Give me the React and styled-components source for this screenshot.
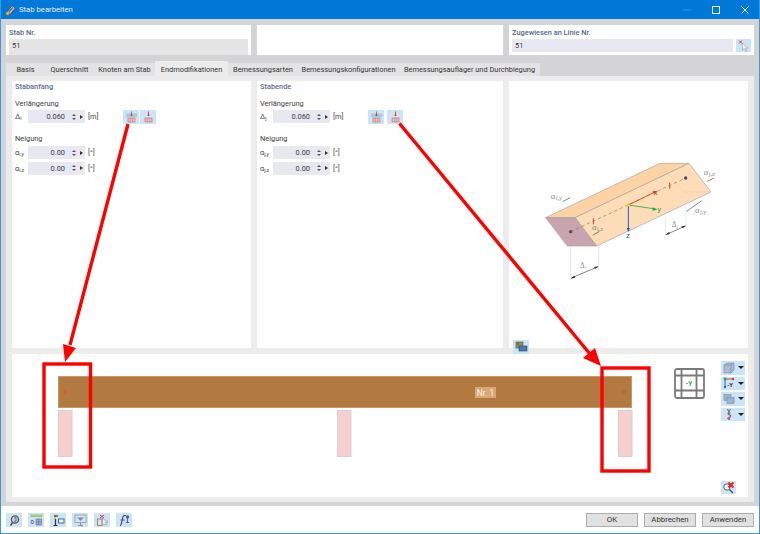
import React from "react";
import styled, { createGlobalStyle } from "styled-components";

const GlobalStyle = createGlobalStyle`
  html, body {
    margin: 0;
    padding: 0;
    background: #ffffff;
  }
  body {
    font-family: Roboto, "Noto Sans", sans-serif;
    font-size: 7.4px;
    color: #3c3c3c;
  }
`;

const Window = styled.div`
  position: relative;
  display: flex;
  flex-direction: column;
  box-sizing: border-box;
  width: 760px;
  height: 534px;
  overflow: hidden;
  border: 1px solid #3f98dc;
  border-top: 0;
  background: #ffffff;
`;

const TitleBar = styled.div`
  display: flex;
  align-items: center;
  flex: 0 0 19px;
  margin: 0 -1px;
  padding-left: 5px;
  background: #0078d7;
  color: #e6f2fb;
  font-size: 7.7px;
`;

const TitleText = styled.span`
  margin-left: 3px;
`;

const WindowControls = styled.div`
  display: flex;
  align-items: center;
  margin-left: auto;
  padding-right: 1px;
`;

const ControlButton = styled.div`
  display: flex;
  align-items: center;
  justify-content: center;
  width: 29px;
  height: 19px;
`;

const Body = styled.div`
  display: flex;
  flex-direction: column;
  flex: 1;
  padding: 6px 5px 4px;
  background: #d4d4d7;
`;

const HeaderRow = styled.div`
  display: grid;
  grid-template-columns: 245px 246px 245px;
  gap: 6px;
  height: 30px;
`;

const HeaderCard = styled.div`
  display: flex;
  flex-direction: column;
  padding: 2px 3px 0;
  background: #ffffff;
`;

const FieldTitle = styled.div`
  height: 12px;
  line-height: 12px;
  color: #56658a;
  font-weight: 500;
`;

const HeaderFieldRow = styled.div`
  display: flex;
  gap: 3px;
`;

const TextField = styled.div`
  flex: 1;
  height: 13px;
  padding-left: 3px;
  line-height: 14px;
  background: ${props => (props.$readOnly ? "#e5e5e5" : "#e8e8f2")};
`;

const Tabs = styled.div`
  display: flex;
  align-items: flex-end;
  height: 15px;
  margin-top: 6px;
`;

const Tab = styled.div`
  display: flex;
  align-items: center;
  justify-content: center;
  box-sizing: border-box;
  width: ${props => props.$width}px;
  height: ${props => (props.$active ? 15 : 13)}px;
  padding-top: ${props => (props.$active ? 2 : 0)}px;
  background: ${props => (props.$active ? "#ececec" : "#e3e3e5")};
  color: #333333;
  white-space: nowrap;
`;

const TabPanel = styled.div`
  display: grid;
  grid-template-columns: 239px 246px 239px;
  grid-template-rows: 267px 143px;
  gap: 6px;
  padding: 5px 6px;
  background: #ececec;
`;

const Card = styled.div`
  display: flex;
  flex-direction: column;
  padding: 0 3px;
  background: #ffffff;
`;

const CardTitle = styled.div`
  height: 11px;
  line-height: 11px;
  color: #5a6a92;
  font-weight: 500;
`;

const GroupTitle = styled.div`
  height: 11px;
  margin-top: ${props => props.$top}px;
  line-height: 11px;
`;

const ParamRow = styled.div`
  display: flex;
  align-items: center;
  height: 13px;
  margin-top: ${props => props.$top}px;
`;

const Symbol = styled.span`
  width: 13px;
  color: #4a4a55;
`;

const Sub = styled.span`
  font-size: 5.4px;
  vertical-align: -1px;
`;

const NumberField = styled.div`
  display: flex;
  align-items: center;
  width: 57px;
  height: 13px;
  background: #e8e8f2;
`;

const FieldValue = styled.span`
  width: 37px;
  text-align: right;
`;

const Spinner = styled.span`
  display: flex;
  flex-direction: column;
  gap: 2px;
  margin-left: 6.5px;
`;

const SpinArrow = styled.span`
  width: 0;
  height: 0;
  border-left: 2px solid transparent;
  border-right: 2px solid transparent;
  ${props => (props.$up ? "border-bottom" : "border-top")}: 2px solid #555555;
`;

const PlayArrow = styled.span`
  width: 0;
  height: 0;
  margin-left: 4.5px;
  border-top: 2px solid transparent;
  border-bottom: 2px solid transparent;
  border-left: 3px solid #333333;
`;

const Unit = styled.span`
  width: 17px;
  margin-left: 3px;
  color: #444444;
`;

const EndButtons = styled.div`
  display: flex;
  gap: ${props => props.$gap}px;
  margin-left: 18px;
`;

const ToolButton = styled.div`
  display: flex;
  align-items: center;
  justify-content: center;
  flex: none;
  width: ${props => props.$width || 16}px;
  height: ${props => props.$height || 14}px;
  background: ${props => props.$bg || "#cce4f7"};
`;

const DiagramCard = styled(Card)`
  padding: 0;
`;

const Isometric = styled.svg`
  flex: none;
  margin: 69px 0 0 1px;
`;

const PictureButton = styled(ToolButton)`
  margin: auto 0 3px 4px;
`;

const ModelCard = styled.div`
  grid-column: 1 / -1;
  display: flex;
  background: #ffffff;
`;

const ModelView = styled.svg`
  flex: none;
`;

const ViewCube = styled.svg`
  flex: none;
  margin: 14px 0 0 14px;
`;

const ToolRail = styled.div`
  display: flex;
  flex-direction: column;
  gap: 2px;
  margin: 7px 0 0 16px;
  width: 24px;
  height: 133px;
`;

const RailButton = styled(ToolButton)`
  width: 24px;
  height: 13.5px;
  justify-content: flex-start;
  padding-left: 2px;
  box-sizing: border-box;
`;

const RailCaret = styled.span`
  width: 0;
  height: 0;
  margin-left: 2.5px;
  border-left: 3px solid transparent;
  border-right: 3px solid transparent;
  border-top: 3px solid #222222;
`;

const ClearButton = styled(ToolButton)`
  margin-top: auto;
`;

const Footer = styled.div`
  display: flex;
  align-items: center;
  flex: 0 0 27px;
  padding: 0 5px;
`;

const FooterIcons = styled.div`
  display: flex;
  gap: 6px;
`;

const FooterButtons = styled.div`
  display: flex;
  gap: 6px;
  margin-left: auto;
`;

const DialogButton = styled.div`
  box-sizing: border-box;
  width: 52px;
  height: 14px;
  border: 1px solid #adadad;
  background: #e1e1e1;
  color: #333333;
  font-size: 7.8px;
  line-height: 12px;
  text-align: center;
`;

const Annotations = styled.svg`
  position: absolute;
  top: 0;
  left: -1px;
  pointer-events: none;
`;

const tabs = [
  ["Basis", 39],
  ["Querschnitt", 49],
  ["Knoten am Stab", 61],
  ["Endmodifikationen", 73, true],
  ["Bemessungsarten", 70],
  ["Bemessungskonfigurationen", 101],
  ["Bemessungsauflager und Durchbiegung", 141]
];

const NumberInput = ({ value }) => (
  <NumberField>
    <FieldValue>{value}</FieldValue>
    <Spinner>
      <SpinArrow $up />
      <SpinArrow />
    </Spinner>
    <PlayArrow />
  </NumberField>
);

const EndIcon = ({ flip }) => (
  <svg width="13" height="12" viewBox="0 0 13 12">
    <rect x="1" y="2.5" width="11" height="3.5" fill={flip ? "#d4e4f2" : "#a9c6e2"} />
    <rect x="3" y="7" width="7" height="4" fill="#f3c4c4" stroke="#b86a6a" strokeWidth="0.6" />
    <path d="M5.3 7v4M7.7 7v4" stroke="#b86a6a" strokeWidth="0.5" />
    <path d="M6.5 0.5v4" stroke="#c9303a" strokeWidth="0.8" />
    <circle cx="6.5" cy="4.2" r="0.9" fill="#c9303a" />
  </svg>
);

const EndSection = ({ title, end, gap }) => (
  <Card>
    <CardTitle>{title}</CardTitle>
    <GroupTitle $top={6}>Verlängerung</GroupTitle>
    <ParamRow $top={1}>
      <Symbol>Δ<Sub>{end}</Sub></Symbol>
      <NumberInput value="0.060" />
      <Unit>[m]</Unit>
      <EndButtons $gap={gap}>
        <ToolButton><EndIcon /></ToolButton>
        <ToolButton><EndIcon flip /></ToolButton>
      </EndButtons>
    </ParamRow>
    <GroupTitle $top={9.5}>Neigung</GroupTitle>
    <ParamRow $top={2.5}>
      <Symbol>α<Sub>{end},y</Sub></Symbol>
      <NumberInput value="0.00" />
      <Unit>[°]</Unit>
    </ParamRow>
    <ParamRow $top={2.5}>
      <Symbol>α<Sub>{end},z</Sub></Symbol>
      <NumberInput value="0.00" />
      <Unit>[°]</Unit>
    </ParamRow>
  </Card>
);

const DimLabel = styled.text`
  font-family: "Liberation Serif", serif;
  font-size: ${props => props.$size || 26}px;
  fill: #8f8f8f;
`;

const AxisLabel = styled.text`
  font-family: Roboto, sans-serif;
  font-size: 24px;
  fill: ${props => props.$color};
`;

const IsometricBeam = () => (
  <Isometric width="240" height="190" viewBox="0 0 720 570">
    <path d="M107 203L450 40H537L195 203Z" fill="#fbd3a4" stroke="#a8a29a" strokeWidth="2" />
    <path d="M195 203L537 40L603 126L260 288Z" fill="#fddcb8" stroke="#a8a29a" strokeWidth="2" />
    <path d="M107 203H195L260 288H172Z" fill="#c9a3ad" stroke="#a8a29a" strokeWidth="2" />
    <path d="M450 40L520 126H603" fill="none" stroke="#edc69a" strokeWidth="1.5" />
    <path d="M182 245L527 84" stroke="#6b5a50" strokeWidth="1.5" strokeDasharray="10 8" />
    <circle cx="182" cy="245" r="5" fill="#4c4c5e" />
    <circle cx="527" cy="84" r="5" fill="#4c4c5e" />
    <path d="M250 205v18M479 98v18" stroke="#d6401c" strokeWidth="3" />
    <path d="M355 165L430 128" stroke="#c8401c" strokeWidth="2.5" />
    <path d="M442 122l-14 2 4 8Z" fill="#c8401c" />
    <path d="M355 165L430 176" stroke="#2aa84a" strokeWidth="2.5" />
    <path d="M442 178l-14-6v11Z" fill="#2aa84a" />
    <path d="M355 165V235" stroke="#2a55c8" strokeWidth="3" />
    <path d="M355 246l-5-12h10Z" fill="#2a55c8" />
    <rect x="350" y="160" width="9" height="9" fill="#f2d21a" />
    <AxisLabel x="431" y="134" $color="#c8401c">x</AxisLabel>
    <AxisLabel x="442" y="186" $color="#2aa84a">y</AxisLabel>
    <AxisLabel x="348" y="264" $color="#2a55c8">z</AxisLabel>
    <path d="M182 290V392M266 290V360M466 200V258M528 150V238" stroke="#d0d0d0" strokeWidth="1.5" />
    <path d="M184 384L264 350M468 254L526 228" stroke="#444" strokeWidth="2" />
    <path d="M182 386l14-3-3-6ZM266 349l-14 2 3 6ZM466 255l14-3-3-6ZM528 227l-14 2 3 6Z" fill="#333" />
    <path d="M158 155L180 143M248 256L268 244M530 184L575 152M592 94L612 84" stroke="#444" strokeWidth="2" />
    <DimLabel x="210" y="355" $size={22}>Δ</DimLabel>
    <DimLabel x="225" y="358" $size={13}>i</DimLabel>
    <DimLabel x="485" y="230" $size={22}>Δ</DimLabel>
    <DimLabel x="500" y="233" $size={13}>j</DimLabel>
    <DimLabel x="122" y="146">α</DimLabel>
    <DimLabel x="137" y="150" $size={19}>i,y</DimLabel>
    <DimLabel x="246" y="240">α</DimLabel>
    <DimLabel x="261" y="244" $size={19}>i,z</DimLabel>
    <DimLabel x="555" y="188">α</DimLabel>
    <DimLabel x="570" y="192" $size={19}>j,y</DimLabel>
    <DimLabel x="581" y="74">α</DimLabel>
    <DimLabel x="596" y="78" $size={19}>j,z</DimLabel>
  </Isometric>
);

const supports = [46, 325, 606];

const BeamModel = () => (
  <ModelView width="648" height="143" viewBox="0 0 648 143">
    <rect x="46.5" y="22.5" width="573" height="31" fill="#b27a40" stroke="#c89a68" />
    <circle cx="53" cy="38" r="1.8" fill="#c9603a" />
    <circle cx="612" cy="38" r="1.8" fill="#c9603a" />
    <rect x="463" y="33" width="21" height="11" fill="#d6a779" />
    <text x="473.5" y="41.5" textAnchor="middle" fontFamily="Roboto, sans-serif" fontSize="8.5" fill="#f8f0e4">Nr. 1</text>
    {supports.map(x => (
      <rect key={x} x={x + 0.5} y="56.5" width="13.5" height="46" fill="#f7cfcf" stroke="#d8d0d0" />
    ))}
  </ModelView>
);

const CubeView = () => (
  <ViewCube width="31" height="31" viewBox="0 0 31 31">
    <rect x="1" y="1" width="29" height="29" rx="2" fill="#ffffff" stroke="#7a7a7a" strokeWidth="1.8" />
    <path d="M7.5 1V30M22.5 1V30M1 7.5H30M1 22.5H30" stroke="#7a7a7a" strokeWidth="1.8" fill="none" />
    <text x="15" y="18" textAnchor="middle" fontFamily="Roboto, sans-serif" fontSize="6.5" fontWeight="700" fill="#3aa655">-Y</text>
  </ViewCube>
);

const RailIcon = ({ kind }) => (
  <svg width="12" height="12" viewBox="0 0 12 12">
    {kind === 0 && (
      <g fill="#a9bdd2" stroke="#7f93aa" strokeWidth="0.7">
        <path d="M1 3L4 1H11V8L8 11H1Z" />
        <path d="M1 3H8V11M8 3L11 1" fill="none" />
      </g>
    )}
    {kind === 1 && (
      <g strokeWidth="1">
        <path d="M2 2H10" stroke="#c43" />
        <path d="M2 2V10" stroke="#26b" />
        <circle cx="2" cy="2" r="1.4" fill="#2a4" />
        <circle cx="10" cy="2" r="1.2" fill="#c43" />
        <circle cx="2" cy="10" r="1.2" fill="#26b" />
        <text x="4" y="10" fontFamily="Roboto, sans-serif" fontSize="6" fontWeight="700" fill="#333">-Y</text>
      </g>
    )}
    {kind === 2 && (
      <g fill="#9fb3c9" stroke="#7f93aa" strokeWidth="0.7">
        <rect x="1" y="1.5" width="7" height="6" />
        <rect x="4" y="4.5" width="7" height="6" />
      </g>
    )}
    {kind === 3 && (
      <g fill="none" strokeWidth="1.2">
        <path d="M4 1.5C9 3 3 5 6 6.5S8 9 4 10.5" stroke="#d33" />
        <path d="M8 1.5C3 3 9 5 6 6.5" stroke="#3aa" />
        <circle cx="6" cy="11" r="0.9" fill="#26b" stroke="none" />
      </g>
    )}
  </svg>
);

const ClearIcon = () => (
  <svg width="13" height="13" viewBox="0 0 13 13">
    <circle cx="5" cy="6" r="3.2" fill="#eef4fa" stroke="#666" strokeWidth="1" />
    <path d="M7.5 8.5L11 12" stroke="#555" strokeWidth="1.4" />
    <path d="M6.5 1.5L11.5 6.5M11.5 1.5L6.5 6.5" stroke="#e0201c" strokeWidth="1.8" />
  </svg>
);

const PictureIcon = () => (
  <svg width="13" height="12" viewBox="0 0 13 12">
    <rect x="1" y="1" width="7" height="6" fill="#7f9a5a" stroke="#555" strokeWidth="0.6" />
    <rect x="4" y="5" width="8" height="5" fill="#4a78b0" stroke="#345" strokeWidth="0.6" />
    <rect x="2" y="2" width="2" height="2" fill="#c9453a" />
  </svg>
);

const PickIcon = () => (
  <svg width="13" height="13" viewBox="0 0 13 13">
    <path d="M5 4L11 9L8.5 9.3L10 12L8.8 12.5L7.4 9.8L5.6 11Z" fill="#eef2f6" stroke="#99a" strokeWidth="0.6" />
    <path d="M2 1.5L5 4.5M5 1.5L2 4.5" stroke="#d33" strokeWidth="1" />
  </svg>
);

const TitleIcon = () => (
  <svg width="11" height="12" viewBox="0 0 11 12">
    <path d="M2 8L7 1.5L10.5 4L5 10.5Z" fill="#b9c2cc" stroke="#3f4650" strokeWidth="0.8" />
    <path d="M4 7.5L8 3.5" stroke="#59616c" strokeWidth="1.2" />
    <circle cx="2.6" cy="9.4" r="1.9" fill="#e8b23a" stroke="#6a5520" strokeWidth="0.4" />
  </svg>
);

const footerIcons = [
  <g key="a">
    <circle cx="7" cy="5.5" r="3.6" fill="#c9d6e2" stroke="#555" strokeWidth="1.3" />
    <path d="M4.5 8.5L2.5 11.5" stroke="#555" strokeWidth="1.5" />
    <path d="M6 3.8h2v3.4h-2" fill="none" stroke="#555" strokeWidth="0.8" />
  </g>,
  <g key="b">
    <rect x="0.5" y="0.5" width="12" height="2.5" fill="#9ccb7c" />
    <text x="0.5" y="10" fontFamily="Roboto, sans-serif" fontSize="6" fill="#334">0</text>
    <path d="M6 5h5.5v6h-5.5Z" fill="#9fb6d8" stroke="#668" strokeWidth="0.6" />
    <path d="M8.7 5v6M6 8h5.5" stroke="#668" strokeWidth="0.6" />
  </g>,
  <g key="c">
    <rect x="2" y="1" width="2" height="2" fill="#d33" />
    <rect x="4" y="1" width="2" height="2" fill="#3a5" />
    <rect x="2" y="3" width="2" height="2" fill="#ec3" />
    <path d="M3.5 5V11M1.5 11.5H5.5" stroke="#333" strokeWidth="1.2" />
    <rect x="6.5" y="5" width="5.5" height="4" fill="#f4f8fc" stroke="#35a" strokeWidth="0.9" />
  </g>,
  <g key="d">
    <rect x="1" y="1" width="11" height="7.5" fill="#dbe5ee" stroke="#8a98a6" strokeWidth="0.8" />
    <path d="M3 3.5H10L6.5 7Z" fill="#6a92b6" />
    <path d="M6.5 8.5V11M4 11.5H9" stroke="#889" strokeWidth="1" />
  </g>,
  <g key="e">
    <path d="M4 1L8 4M8 1L4 4" stroke="#d33" strokeWidth="1" />
    <rect x="1.5" y="5" width="4.5" height="6.5" fill="#e8e2da" stroke="#776" strokeWidth="0.8" />
    <path d="M6.5 4.5L12 8L9.5 8.5L10.5 11L8 10L6.5 11.5Z" fill="#eef2f6" stroke="#889" strokeWidth="0.6" />
  </g>,
  <g key="f">
    <path d="M2 11.5C4.5 11.5 3.5 3 6 1.5H8" fill="none" stroke="#445" strokeWidth="1.1" />
    <path d="M2.5 6H7" stroke="#445" strokeWidth="0.8" />
    <circle cx="9.5" cy="3" r="1.7" fill="#4d5fae" />
    <path d="M9.5 4V8M8 8.5H11" stroke="#4d5fae" strokeWidth="1" />
  </g>
];

const RedMarks = () => (
  <Annotations width="760" height="534" viewBox="0 0 760 534">
    <g fill="none" stroke="#fe0000" strokeWidth="3.4">
      <rect x="44" y="364" width="46.5" height="103" />
      <rect x="602" y="368" width="47" height="103" />
      <path d="M128 124L70 345" />
      <path d="M399.5 123.5L590 354" />
    </g>
    <path d="M65 362L63 344L76 348Z" fill="#fe0000" />
    <path d="M601 366L583 358L595 348Z" fill="#fe0000" />
  </Annotations>
);

export default function App() {
  return (
    <Window>
      <GlobalStyle />
      <TitleBar>
        <TitleIcon />
        <TitleText>Stab bearbeiten</TitleText>
        <WindowControls>
          <ControlButton>
            <svg width="8" height="8" viewBox="0 0 8 8"><path d="M0 4H8" stroke="#3d95dd" /></svg>
          </ControlButton>
          <ControlButton>
            <svg width="8" height="8" viewBox="0 0 8 8"><rect x="0.5" y="0.5" width="7" height="7" fill="none" stroke="#e6f2fb" /></svg>
          </ControlButton>
          <ControlButton>
            <svg width="8" height="8" viewBox="0 0 8 8"><path d="M0.5 0.5L7.5 7.5M7.5 0.5L0.5 7.5" stroke="#e6f2fb" /></svg>
          </ControlButton>
        </WindowControls>
      </TitleBar>
      <Body>
        <HeaderRow>
          <HeaderCard>
            <FieldTitle>Stab Nr.</FieldTitle>
            <TextField $readOnly>51</TextField>
          </HeaderCard>
          <HeaderCard />
          <HeaderCard>
            <FieldTitle>Zugewiesen an Linie Nr.</FieldTitle>
            <HeaderFieldRow>
              <TextField>51</TextField>
              <ToolButton $width={15} $height={13}><PickIcon /></ToolButton>
            </HeaderFieldRow>
          </HeaderCard>
        </HeaderRow>
        <Tabs>
          {tabs.map(([label, width, active]) => (
            <Tab key={label} $width={width} $active={active}>{label}</Tab>
          ))}
        </Tabs>
        <TabPanel>
          <EndSection title="Stabanfang" end="i" gap={1} />
          <EndSection title="Stabende" end="j" gap={3} />
          <DiagramCard>
            <IsometricBeam />
            <PictureButton><PictureIcon /></PictureButton>
          </DiagramCard>
          <ModelCard>
            <BeamModel />
            <CubeView />
            <ToolRail>
              {[0, 1, 2, 3].map(kind => (
                <RailButton key={kind}>
                  <RailIcon kind={kind} />
                  <RailCaret />
                </RailButton>
              ))}
              <ClearButton $height={13} $width={15}><ClearIcon /></ClearButton>
            </ToolRail>
          </ModelCard>
        </TabPanel>
      </Body>
      <Footer>
        <FooterIcons>
          {footerIcons.map((icon, i) => (
            <ToolButton key={i}>
              <svg width="13" height="12" viewBox="0 0 13 12">{icon}</svg>
            </ToolButton>
          ))}
        </FooterIcons>
        <FooterButtons>
          <DialogButton>OK</DialogButton>
          <DialogButton>Abbrechen</DialogButton>
          <DialogButton>Anwenden</DialogButton>
        </FooterButtons>
      </Footer>
      <RedMarks />
    </Window>
  );
}
